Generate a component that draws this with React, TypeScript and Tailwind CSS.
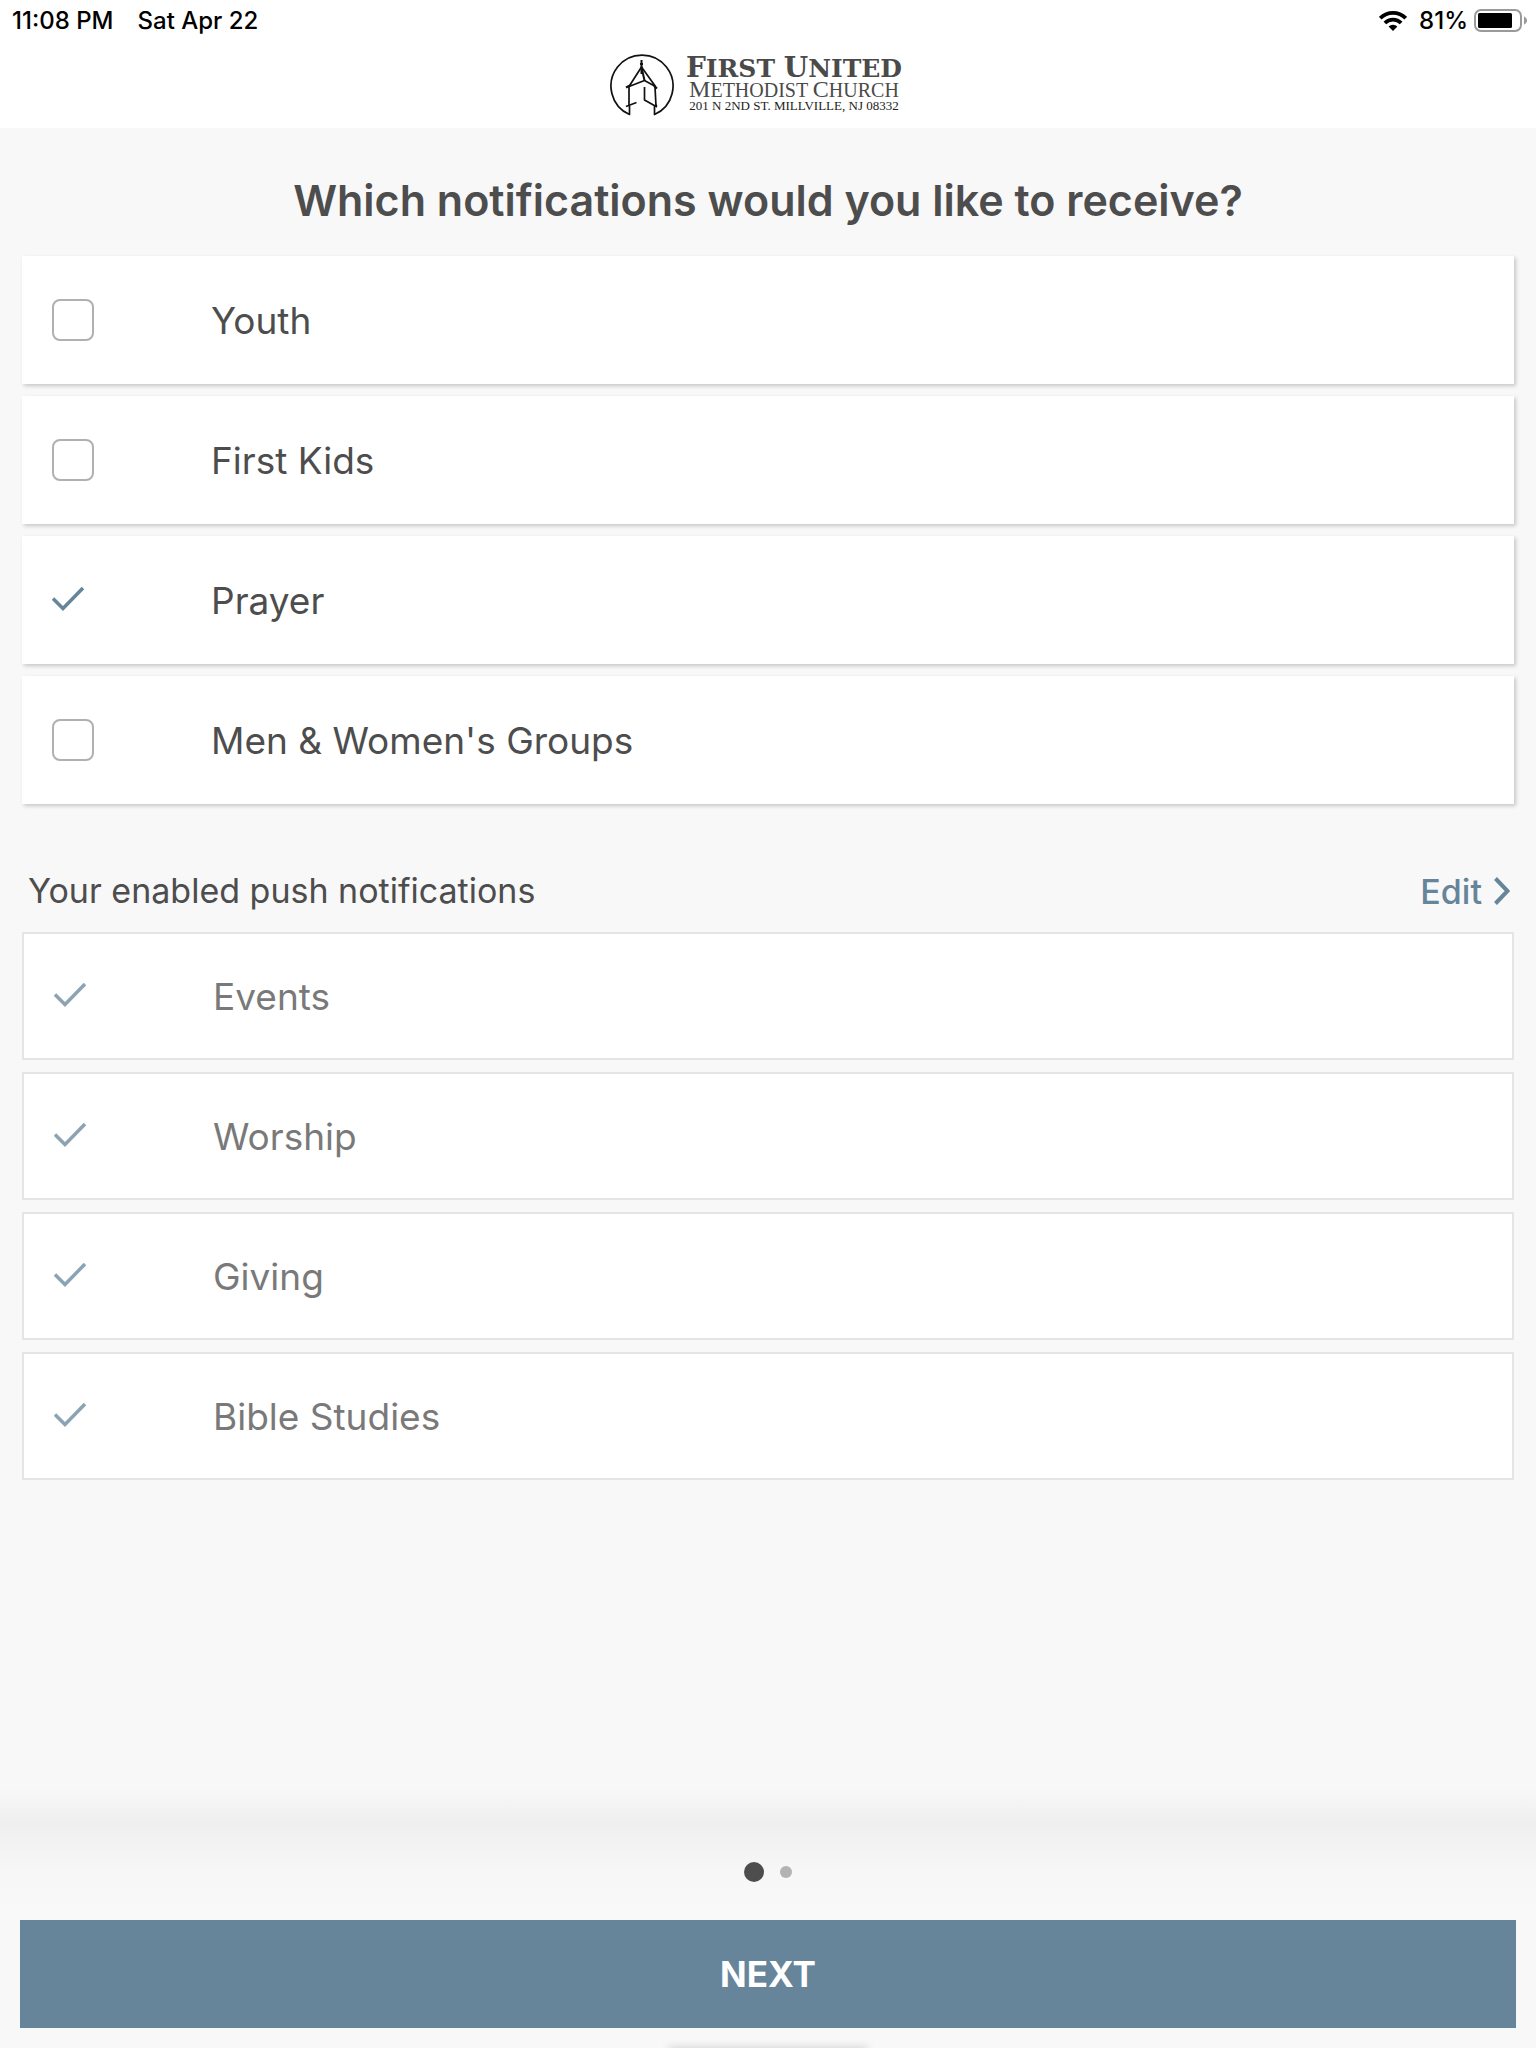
import { useState } from 'react';

const TOPICS = ['Youth', 'First Kids', 'Prayer', "Men & Women's Groups"];
const ENABLED = ['Events', 'Worship', 'Giving', 'Bible Studies'];

function CheckMark() {
  return (
    <svg
      className="absolute left-0 top-0 hidden h-[42px] w-[42px] pointer-events-none peer-checked:block"
      viewBox="0 0 42 42"
      fill="none"
      stroke="#66859a"
      strokeWidth="3.5"
    >
      <path d="M1 19.5 11 29.5 31 9" />
    </svg>
  );
}

function StatusBar() {
  return (
    <div className="flex h-10 items-center justify-between pl-3 pr-2 pt-0.5 text-2xl font-medium text-black">
      <div className="flex gap-6">
        <span>11:08 PM</span>
        <span>Sat Apr 22</span>
      </div>
      <div className="flex items-center">
        <svg className="mr-3 h-5 w-7" viewBox="0 0 28 20" fill="none" stroke="#000" strokeWidth="3.8">
          <path d="M1.3 7.2a18 18 0 0 1 25.4 0" />
          <path d="M5.9 12a11.5 11.5 0 0 1 16.2 0" />
          <path d="M14 20 9.6 15.6a6.3 6.3 0 0 1 8.8 0Z" fill="#000" stroke="none" />
        </svg>
        <span>81%</span>
        <svg className="ml-1.5 h-6 w-[54px]" viewBox="0 0 54 24">
          <rect x="1" y="1" width="46" height="21" rx="6" fill="none" stroke="#9a9a9a" strokeWidth="2" />
          <rect x="4" y="4" width="34" height="15" rx="1.5" fill="#000" />
          <path d="M50 7.5c4 1.5 4 6.5 0 8Z" fill="#9a9a9a" />
        </svg>
      </div>
    </div>
  );
}

function Logo() {
  return (
    <div className="flex items-start justify-center gap-3 pr-6 pt-3.5">
      <svg className="h-16 w-16" viewBox="0 0 64 64" fill="none" stroke="#111" strokeWidth="1.7" strokeLinejoin="round">
        <path d="M19.500 52V60.500A31 31 0 1 1 44.500 60.500V52.500L47 51" />
        <path d="M31.500 6V20M30 10h3" strokeWidth="2" />
        <path d="M31.500 13 19 32.500 34.500 26.500 45.500 32.500Z" />
        <path d="M31.500 13 34.500 26.500" strokeWidth="2" />
        <path d="M16 33.500 20 31.500M44 32 47 34.500" strokeWidth="2.2" />
        <path d="M19 33V52M45 33 46 52" />
        <path d="M16 52.500 26.500 48.500M34.500 33V46L47 53" />
      </svg>
      <div className="whitespace-nowrap text-center font-['Liberation_Serif',serif] text-[#4a4a4a]">
        <div className="font-['DejaVu_Serif',serif] text-[25px]/7 font-bold">
          <span className="text-[28px]/7">F</span>IRST <span className="text-[28px]/7">U</span>NITED
        </div>
        <div className="text-xl/3">
          <span className="text-2xl/3">M</span>ETHODIST <span className="text-2xl/3">C</span>HURCH
        </div>
        <div className="text-[13px]/5 text-[#222]">201 N 2ND ST. MILLVILLE, NJ 08332</div>
      </div>
    </div>
  );
}

export default function App() {
  const [selected, setSelected] = useState<string[]>(['Prayer']);

  const toggle = (name: string) =>
    setSelected((prev) => (prev.includes(name) ? prev.filter((n) => n !== name) : [...prev, name]));

  return (
    <div className="relative flex min-h-screen flex-col overflow-hidden bg-[#f8f8f8] font-[Inter,sans-serif] text-[#4d4d4d]">
      <header className="h-32 bg-white">
        <StatusBar />
        <Logo />
      </header>

      <main className="px-[22px]">
        <h1 className="pt-11 pb-7 text-center text-[43px]/[56px] font-semibold">
          Which notifications would you like to receive?
        </h1>

        <div className="flex flex-col gap-3">
          {TOPICS.map((name) => (
            <label
              key={name}
              className="flex h-32 items-center gap-[117px] bg-white pl-[30px] text-[37px]/[48px] shadow-[2px_2px_4px_rgba(0,0,0,0.2)]"
            >
              <span className="relative h-[42px] w-[42px]">
                <input
                  type="checkbox"
                  checked={selected.includes(name)}
                  onChange={() => toggle(name)}
                  className="peer block h-[42px] w-[42px] appearance-none rounded-lg border-2 border-[#b0b0b0] checked:border-transparent"
                />
                <CheckMark />
              </span>
              <span className="pt-0.5">{name}</span>
            </label>
          ))}
        </div>

        <div className="flex items-center justify-between pt-[62px] pb-4 pl-1.5 pr-1">
          <h2 className="text-[34px]/[48px]">Your enabled push notifications</h2>
          <button type="button" className="flex items-center gap-3 text-[34px]/[48px] font-medium text-[#66859a]">
            <span className="pt-0.5">Edit</span>
            <svg className="h-7 w-4" viewBox="0 0 16 28" fill="none" stroke="currentColor" strokeWidth="4">
              <path d="M1.500 1.500 13.500 14 1.500 26.500" />
            </svg>
          </button>
        </div>

        <div className="flex flex-col gap-3">
          {ENABLED.map((name) => (
            <label
              key={name}
              className="flex h-32 items-center gap-[117px] border-2 border-[#e5e5e5] bg-white pl-[30px] text-[37px]/[48px]"
            >
              <span className="relative h-[42px] w-[42px] opacity-75">
                <input type="checkbox" checked disabled className="peer block h-[42px] w-[42px] appearance-none" />
                <CheckMark />
              </span>
              <span className="pt-0.5 opacity-75">{name}</span>
            </label>
          ))}
        </div>
      </main>

      <footer className="mt-auto">
        <div className="h-9 bg-linear-to-b from-[#f8f8f8] to-[#efefef]" />
        <div className="flex h-24 items-center justify-center gap-4 bg-linear-to-b from-[#efefef] via-[#f7f7f7] to-[#f9f9f9]">
          <span className="h-5 w-5 rounded-full bg-[#4d4d4d]" />
          <span className="h-3 w-3 rounded-full bg-[#b3b3b3]" />
        </div>
        <div className="px-5 pb-5">
          <button type="button" className="h-[108px] w-full bg-[#66859a] text-[35px] font-bold text-white">
            NEXT
          </button>
        </div>
      </footer>

      {/* home indicator glow */}
      <div className="absolute -bottom-1 left-1/2 h-1 w-[200px] -translate-x-1/2 rounded-full shadow-[0_0_8px_rgba(0,0,0,0.25)]" />
    </div>
  );
}
